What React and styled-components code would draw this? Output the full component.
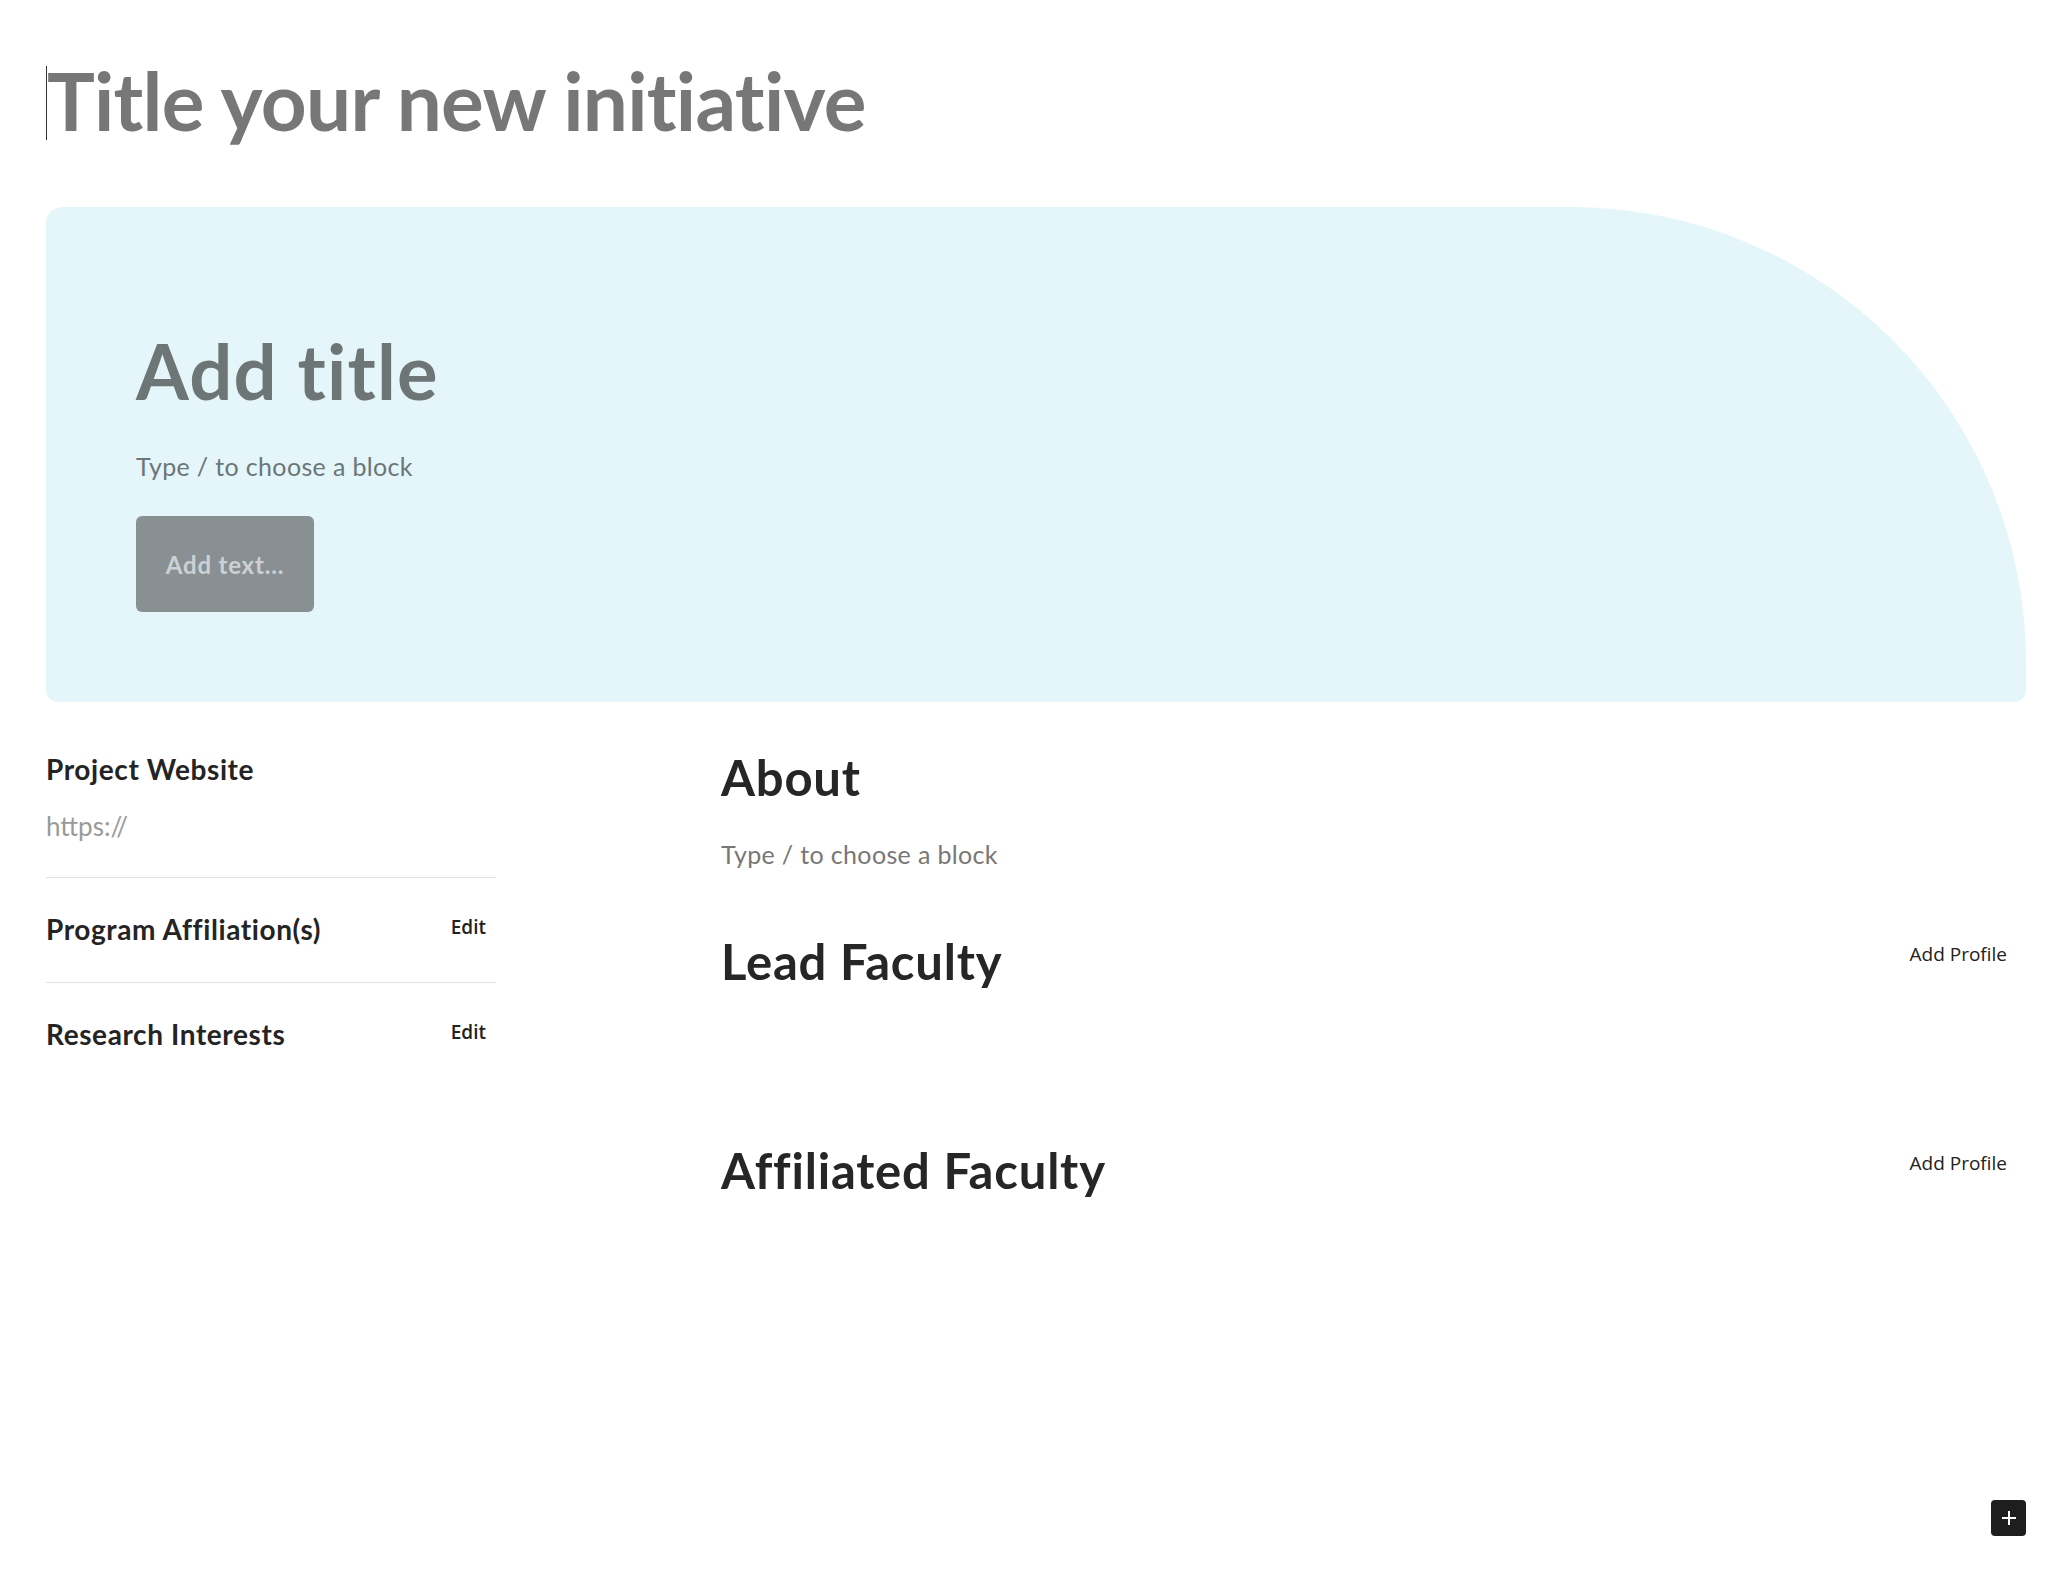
import React from "react";
import styled, { createGlobalStyle } from "styled-components";

const GlobalStyle = createGlobalStyle`
  * { box-sizing: border-box; }
  body {
    margin: 0;
    background: #ffffff;
    font-family: Lato, "Noto Sans", sans-serif;
  }
`;

function App() {
  return (
    <Page>
      <GlobalStyle />
      <PageTitle>Title your new initiative</PageTitle>

      <Hero>
        <HeroTitle>Add title</HeroTitle>
        <Placeholder tone="#6c7577">Type / to choose a block</Placeholder>
        <AddTextButton>Add text...</AddTextButton>
      </Hero>

      <Columns>
        <Sidebar>
          <SideSection first>
            <SideLabel>Project Website</SideLabel>
            <UrlText>https://</UrlText>
          </SideSection>
          <SideSection>
            <SideHead>
              <SideLabel>Program Affiliation(s)</SideLabel>
              <EditLink>Edit</EditLink>
            </SideHead>
          </SideSection>
          <SideSection last>
            <SideHead>
              <SideLabel>Research Interests</SideLabel>
              <EditLink>Edit</EditLink>
            </SideHead>
          </SideSection>
        </Sidebar>

        <Main>
          <SectionTitle>About</SectionTitle>
          <Placeholder tone="#777777" spaced>Type / to choose a block</Placeholder>

          <SectionHead>
            <SectionTitle>Lead Faculty</SectionTitle>
            <AddProfile>Add Profile</AddProfile>
          </SectionHead>
          <ProfileList />

          <SectionHead>
            <SectionTitle>Affiliated Faculty</SectionTitle>
            <AddProfile>Add Profile</AddProfile>
          </SectionHead>
        </Main>
      </Columns>

      <FloatingAdd aria-label="Add block">
        <svg width="16" height="16" viewBox="0 0 16 16">
          <path d="M8 1v14M1 8h14" stroke="#fff" strokeWidth="2" />
        </svg>
      </FloatingAdd>
    </Page>
  );
}

export default App;

const Page = styled.div`
  min-height: 100vh;
  padding: 0 42px 120px 46px;
`;

const PageTitle = styled.h1`
  position: relative;
  margin: 52px 0 0;
  padding-left: 1px;
  font-size: 80px;
  line-height: 96px;
  font-weight: 700;
  letter-spacing: -0.7px;
  color: #777777;

  &::before {
    content: "";
    position: absolute;
    left: 0;
    top: 14px;
    width: 1px;
    height: 74px;
    background: #333;
  }
`;

const Hero = styled.section`
  margin-top: 59px;
  padding: 118px 90px 90px;
  background: #e4f6fa;
  border-radius: 16px 455px 12px 12px / 16px 455px 12px 12px;
`;

const HeroTitle = styled.h2`
  margin: 0;
  font-size: 76px;
  line-height: 1.2;
  font-weight: 700;
  letter-spacing: 1.2px;
  color: #6e7576;
`;

const Placeholder = styled.p`
  margin: ${(p) => (p.spaced ? "29px 0 0" : "32px 0 0")};
  font-size: 25px;
  line-height: 36px;
  font-weight: 400;
  letter-spacing: 0.35px;
  color: ${(p) => p.tone};
`;

const AddTextButton = styled.button`
  display: block;
  margin-top: 32px;
  width: 178px;
  height: 96px;
  border: 0;
  border-radius: 6px;
  background: #899093;
  color: #cdd1d3;
  font-family: Lato, "Noto Sans", sans-serif;
  font-size: 24px;
  font-weight: 700;
  letter-spacing: 0.8px;
`;

const Columns = styled.div`
  display: grid;
  grid-template-columns: 450px 1fr;
  column-gap: 225px;
  margin-top: 46px;
`;

const Sidebar = styled.aside`
  padding-top: 5px;
`;

const SideSection = styled.div`
  padding: ${(p) => (p.first ? "0" : "35px")} 10px ${(p) => (p.last ? "0" : "35px")} 0;
  border-bottom: ${(p) => (p.last ? "none" : "1px solid #e2e2e2")};
`;

const SideHead = styled.div`
  display: flex;
  justify-content: space-between;
  align-items: flex-start;
`;

const SideLabel = styled.h3`
  margin: 0;
  font-size: 28px;
  line-height: 1.2;
  font-weight: 700;
  letter-spacing: 0.6px;
  color: #242424;
`;

const EditLink = styled.span`
  margin-top: 1px;
  font-family: "Open Sans", "Noto Sans", sans-serif;
  font-size: 19px;
  font-weight: 600;
  color: #222;
`;

const UrlText = styled.div`
  margin-top: 24px;
  font-size: 26px;
  line-height: 1.2;
  color: #9a9a9a;
`;

const Main = styled.main`
  padding-right: 19px;
`;

const SectionHead = styled.div`
  display: flex;
  justify-content: space-between;
  align-items: flex-start;
  margin-top: 60px;
`;

const SectionTitle = styled.h2`
  margin: 0;
  font-size: 49px;
  line-height: 1.2;
  font-weight: 700;
  letter-spacing: 0.8px;
  color: #262626;
`;

const AddProfile = styled.span`
  margin-top: 9px;
  font-family: "Open Sans", "Noto Sans", sans-serif;
  font-size: 19px;
  color: #222;
`;

const ProfileList = styled.div`
  min-height: 90px;
`;

const FloatingAdd = styled.button`
  position: fixed;
  right: 42px;
  bottom: 37px;
  width: 35px;
  height: 36px;
  display: flex;
  align-items: center;
  justify-content: center;
  padding: 0;
  border: 0;
  border-radius: 4px;
  background: #1e1e1e;
`;
